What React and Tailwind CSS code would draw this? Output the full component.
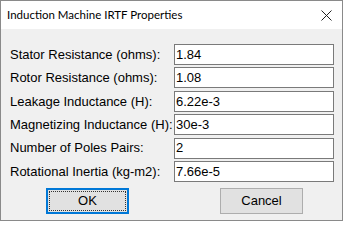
const fields = [
    { label: 'Stator Resistance (ohms):', value: '1.84' },
    { label: 'Rotor Resistance (ohms):', value: '1.08' },
    { label: 'Leakage Inductance (H):', value: '6.22e-3' },
    { label: 'Magnetizing Inductance (H):', value: '30e-3' },
    { label: 'Number of Poles Pairs:', value: '2' },
    { label: 'Rotational Inertia (kg-m2):', value: '7.66e-5' },
];

export default function App() {
    return (
        <div className="w-[343px] h-[221px] flex flex-col border border-[#8a8a8a] bg-[#f0f0f0] overflow-hidden">
            {/* Title bar */}
            <div className="h-[28px] shrink-0 bg-white flex items-center justify-between pl-[6px] pr-[10px]">
                <span className="text-[11.5px] text-black" style={{ fontFamily: 'Lato, sans-serif' }}>
                    Induction Machine IRTF Properties
                </span>
                <svg width="11" height="11" viewBox="0 0 11 11" fill="none" stroke="#222" strokeWidth="1">
                    <line x1="0.5" y1="0.5" x2="10.5" y2="10.5" />
                    <line x1="10.5" y1="0.5" x2="0.5" y2="10.5" />
                </svg>
            </div>

            {/* Body */}
            <div className="flex-1 flex flex-col pt-[15px] pl-[9px] pr-[8px]" style={{ fontFamily: '"Liberation Sans", Arial, sans-serif' }}>
                <div className="flex flex-col gap-[2.4px]">
                    {fields.map(f => (
                        <div key={f.label} className="flex items-center h-[21px]">
                            <span className="w-[164px] shrink-0 text-[13px] text-black">{f.label}</span>
                            <div className="flex-1 h-[21px] bg-white border border-[#7a7a7a] flex items-center pl-[1px] text-[13px] text-black">
                                {f.value}
                            </div>
                        </div>
                    ))}
                </div>

                <div className="flex mt-[6px]">
                    <button className="ml-[36px] w-[83px] h-[26px] bg-[#e1e1e1] border-2 border-[#0078d7] flex items-center justify-center p-[1px]">
                        <span className="w-full h-full border border-dotted border-[#333] flex items-center justify-center text-[13px] text-black">
                            OK
                        </span>
                    </button>
                    <button className="ml-[91px] w-[83px] h-[26px] bg-[#e1e1e1] border border-[#adadad] flex items-center justify-center text-[13px] text-black">
                        Cancel
                    </button>
                </div>
            </div>
        </div>
    );
}
